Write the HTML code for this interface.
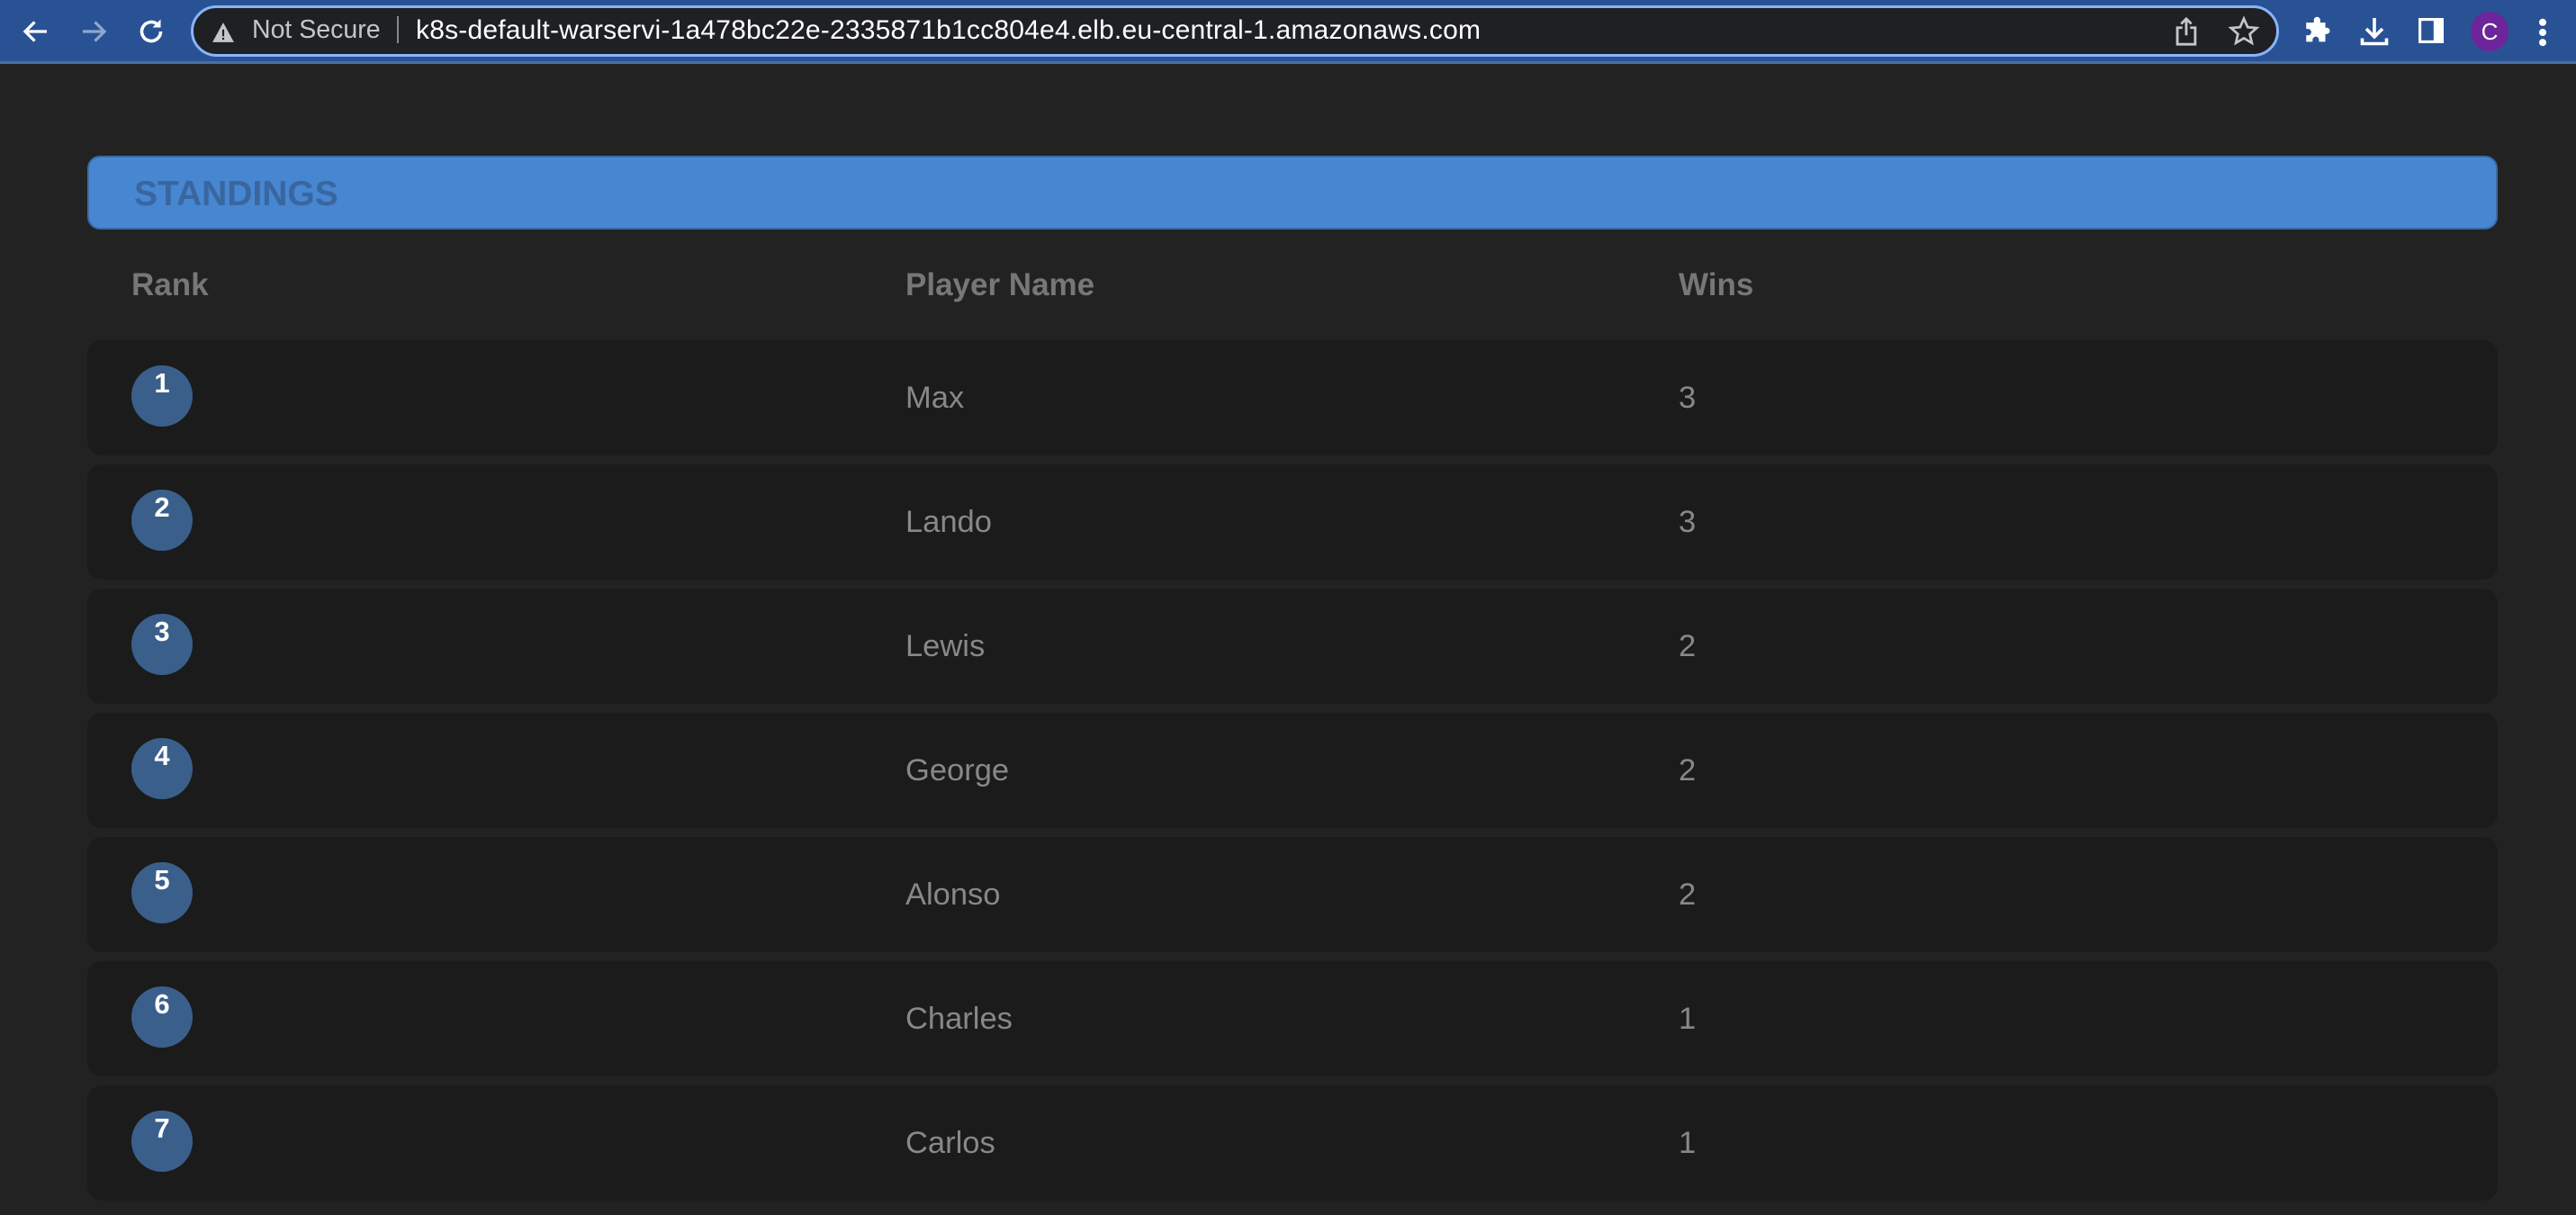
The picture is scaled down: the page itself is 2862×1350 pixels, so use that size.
<!DOCTYPE html>
<html><head><meta charset="utf-8"><style>
*{margin:0;padding:0;box-sizing:border-box}
html,body{width:2862px;height:1350px;overflow:hidden;background:#222222;font-family:"Liberation Sans",Arial,sans-serif}
.tb{position:absolute;left:0;top:0;width:2862px;height:71px;background:#295294;border-bottom:3px solid #4a6fa5}
.omni{position:absolute;left:212px;top:6px;width:2320px;height:57px;border:3px solid #8ab4f8;border-radius:30px;background:#1f2023}
.ic{position:absolute}
.ns{position:absolute;left:280px;top:17px;font-size:28.5px;color:#c4c7c5}
.sep{position:absolute;left:441px;top:18px;width:2px;height:30px;background:#888}
.url{position:absolute;left:462px;top:17px;font-size:30px;letter-spacing:0.2px;color:#fff}
.hdr{position:absolute;left:97px;top:173px;width:2678px;height:82px;background:#4786d1;border:2px solid #3b6aa5;border-radius:14px}
.hdr span{position:absolute;left:50px;top:19px;font-size:39px;font-weight:bold;color:#3a66a0}
.col{position:absolute;top:297px;font-size:35px;font-weight:bold;color:#777}
.row{position:absolute;left:97px;width:2678px;height:128px;background:#1b1b1b;border-radius:16px}
.c{position:absolute;left:49px;top:28px;width:68px;height:68px;border-radius:50%;background:#3a5f8b;color:#fff;font-weight:bold;font-size:31px;text-align:center;line-height:40px}
.t{position:absolute;top:45px;font-size:34.5px;color:#888}
</style></head><body>
<div class="tb">
<svg class="ic" style="left:22px;top:17px" width="36" height="36" viewBox="0 0 24 24"><path d="M20 12H5M11 5l-7 7 7 7" stroke="#fff" stroke-width="2.2" fill="none"/></svg>
<svg class="ic" style="left:86px;top:17px" width="36" height="36" viewBox="0 0 24 24"><path d="M4 12h15M13 5l7 7-7 7" stroke="#8fa6cc" stroke-width="2.2" fill="none"/></svg>
<svg class="ic" style="left:150px;top:17px" width="36" height="36" viewBox="0 0 24 24"><path d="M19 12a7 7 0 1 1-2.1-5" stroke="#fff" stroke-width="2.4" fill="none"/><path d="M19 3v6h-6z" fill="#fff"/></svg>
<div class="omni">
<svg class="ic" style="left:20px;top:15px" width="26" height="24" viewBox="0 0 24 22"><path d="M12 1L23 21H1z" fill="#c4c7c5"/><rect x="11" y="8" width="2" height="7" fill="#1f2023"/><rect x="11" y="16.5" width="2" height="2" fill="#1f2023"/></svg>
</div>
<div class="ns">Not Secure</div><div class="sep"></div>
<div class="url">k8s-default-warservi-1a478bc22e-2335871b1cc804e4.elb.eu-central-1.amazonaws.com</div>
<svg class="ic" style="left:2414px;top:18px" width="30" height="34" viewBox="0 0 20 24"><path d="M7 9H3v13h14V9h-4M10 15V2M6 6l4-4 4 4" stroke="#c4c7c5" stroke-width="2" fill="none"/></svg>
<svg class="ic" style="left:2475px;top:17px" width="36" height="36" viewBox="0 0 24 24"><path d="M12 2.5l2.8 6.3 6.7.6-5.1 4.5 1.5 6.6L12 17l-5.9 3.5 1.5-6.6L2.5 9.4l6.7-.6z" stroke="#c4c7c5" stroke-width="1.8" fill="none"/></svg>
<svg class="ic" style="left:2558px;top:18px" width="34" height="34" viewBox="0 0 24 24"><path d="M9 3a2.5 2.5 0 0 1 5 0v2h4v4h1a2.5 2.5 0 0 1 0 5h-1v6h-5v-1.5a2.5 2.5 0 0 0-5 0V20H3v-5h1.5a2.5 2.5 0 0 0 0-5H3V5h6z" fill="#fff"/></svg>
<svg class="ic" style="left:2620px;top:17px" width="36" height="36" viewBox="0 0 24 24"><path d="M12 2v13M6 10l6 6 6-6M3 17v4h18v-4" stroke="#fff" stroke-width="2.4" fill="none"/></svg>
<svg class="ic" style="left:2687px;top:20px" width="28" height="28" viewBox="0 0 20 20"><rect x="1" y="1" width="18" height="18" fill="none" stroke="#fff" stroke-width="2.5"/><rect x="12" y="1" width="7" height="18" fill="#fff"/></svg>
<div style="position:absolute;left:2745px;top:13px;width:42px;height:44px;border-radius:50%;background:#6e249b;color:#fff;font-size:26px;text-align:center;line-height:44px">C</div>
<svg class="ic" style="left:2820px;top:20px" width="10" height="32" viewBox="0 0 6 20"><circle cx="3" cy="3" r="2.5" fill="#fff"/><circle cx="3" cy="10" r="2.5" fill="#fff"/><circle cx="3" cy="17" r="2.5" fill="#fff"/></svg>
</div>
<div class="hdr"><span>STANDINGS</span></div>
<div class="col" style="left:146px">Rank</div>
<div class="col" style="left:1006px">Player Name</div>
<div class="col" style="left:1865px">Wins</div>
<div class="row" style="top:378px"><div class="c">1</div><div class="t" style="left:909px">Max</div><div class="t" style="left:1768px">3</div></div>
<div class="row" style="top:516px"><div class="c">2</div><div class="t" style="left:909px">Lando</div><div class="t" style="left:1768px">3</div></div>
<div class="row" style="top:654px"><div class="c">3</div><div class="t" style="left:909px">Lewis</div><div class="t" style="left:1768px">2</div></div>
<div class="row" style="top:792px"><div class="c">4</div><div class="t" style="left:909px">George</div><div class="t" style="left:1768px">2</div></div>
<div class="row" style="top:930px"><div class="c">5</div><div class="t" style="left:909px">Alonso</div><div class="t" style="left:1768px">2</div></div>
<div class="row" style="top:1068px"><div class="c">6</div><div class="t" style="left:909px">Charles</div><div class="t" style="left:1768px">1</div></div>
<div class="row" style="top:1206px"><div class="c">7</div><div class="t" style="left:909px">Carlos</div><div class="t" style="left:1768px">1</div></div>
</body></html>
